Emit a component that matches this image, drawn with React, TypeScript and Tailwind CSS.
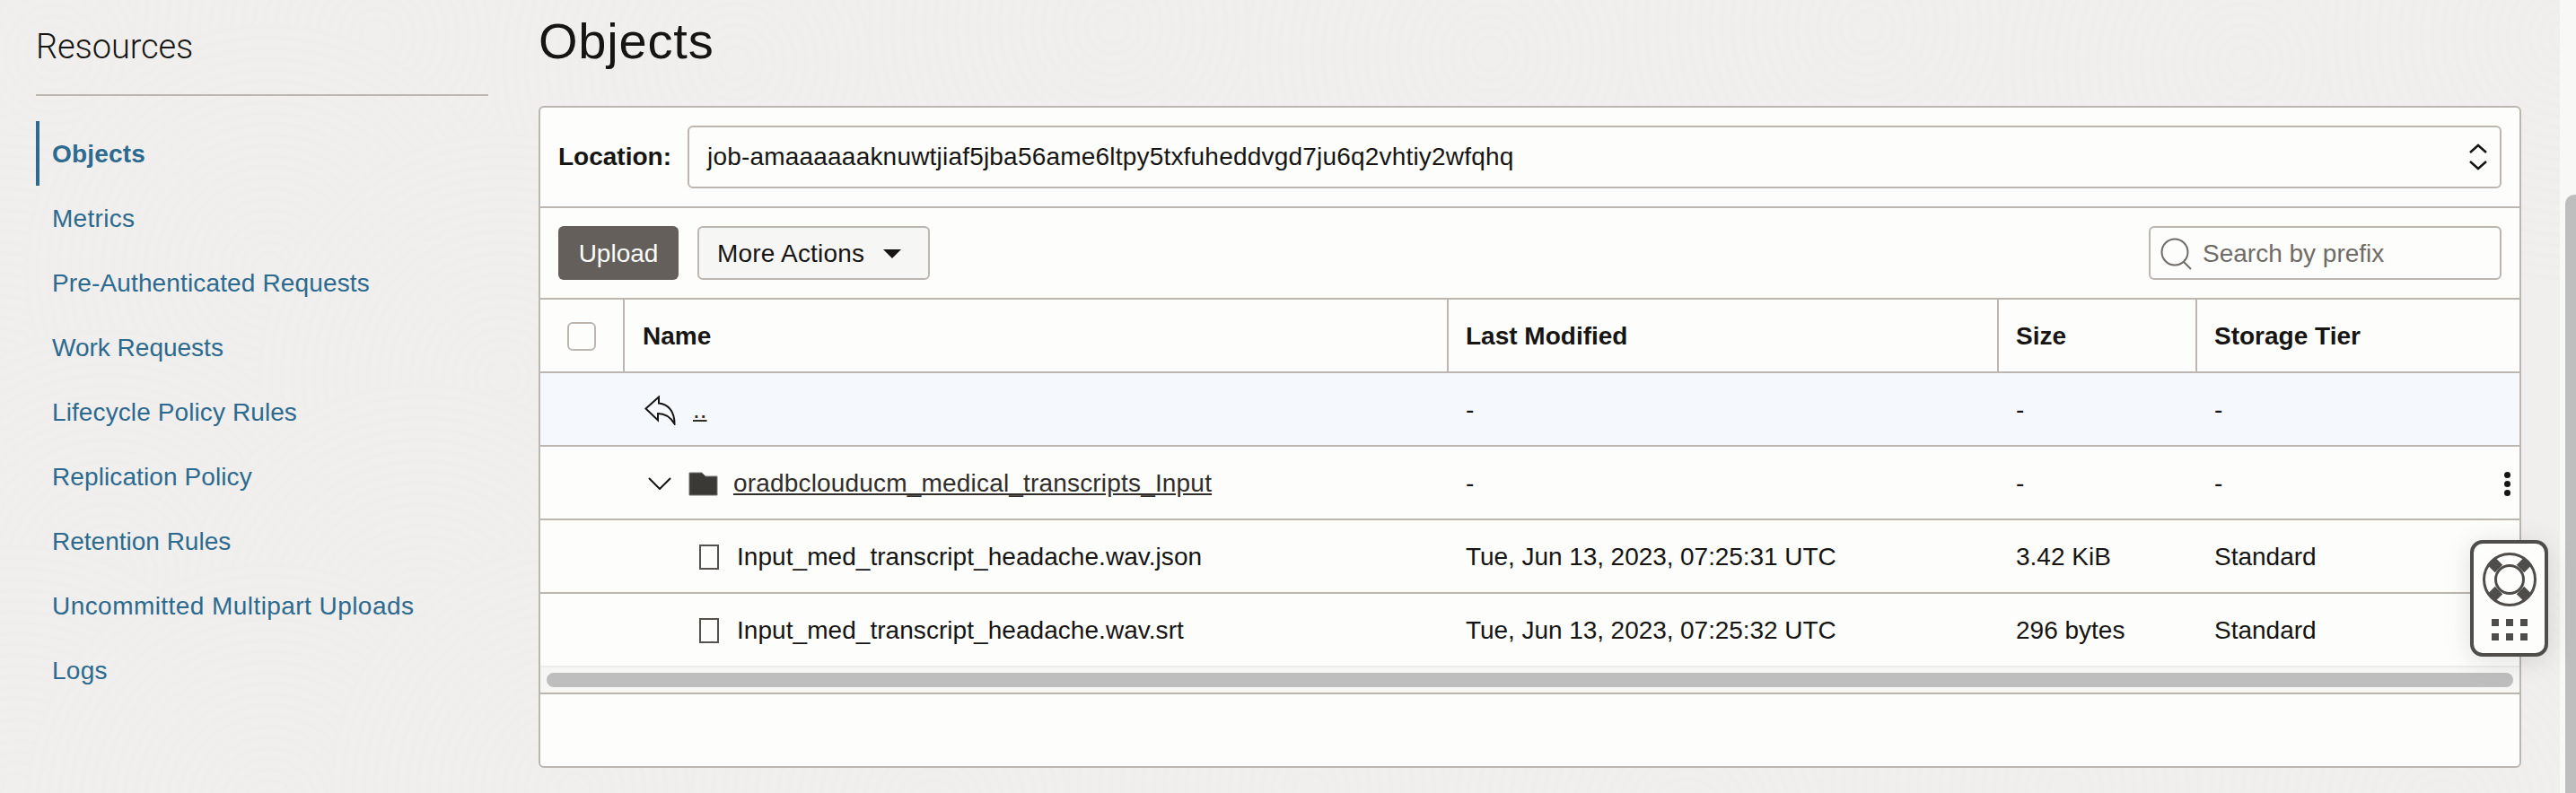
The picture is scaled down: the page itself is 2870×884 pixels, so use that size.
const navItems = [
  { label: 'Objects', spacing: 'tracking-[0.2px]' },
  { label: 'Metrics', spacing: 'tracking-[0.3px]' },
  { label: 'Pre-Authenticated Requests', spacing: 'tracking-[0.14px]' },
  { label: 'Work Requests', spacing: 'tracking-[0px]' },
  { label: 'Lifecycle Policy Rules', spacing: 'tracking-[0.1px]' },
  { label: 'Replication Policy', spacing: 'tracking-[0.1px]' },
  { label: 'Retention Rules', spacing: 'tracking-[0px]' },
  { label: 'Uncommitted Multipart Uploads', spacing: 'tracking-[0.44px]' },
  { label: 'Logs', spacing: 'tracking-[0.3px]' },
];

const files = [
  { name: 'Input_med_transcript_headache.wav.json', modified: 'Tue, Jun 13, 2023, 07:25:31 UTC', size: '3.42 KiB' },
  { name: 'Input_med_transcript_headache.wav.srt', modified: 'Tue, Jun 13, 2023, 07:25:32 UTC', size: '296 bytes' },
];

// centres of the faint fingerprint swirls behind the page, painted back to front
const swirls = [
  [60, 60], [420, 40], [820, 70], [1240, 30], [1660, 60], [2080, 30], [2500, 70], [2860, 40],
  [0, 420], [300, 300], [560, 420], [120, 640], [470, 700], [20, 880], [300, 900], [640, 880],
  [1040, 900], [1460, 880], [1880, 910], [2300, 880], [2720, 900],
];
const rings = Array.from({ length: 22 }, (_, i) => 270 - i * 12);

const rowGrid = 'grid grid-cols-[94px_918px_613px_221px_1fr] items-center';

function Backdrop() {
  return (
    <svg className="absolute inset-0 -z-10" width="2870" height="884" fill="#f0efed" stroke="#efeeec" strokeWidth="4">
      {swirls.map(([cx, cy]) => (
        <g key={`${cx}-${cy}`}>
          {rings.map((r) => (
            <circle key={r} cx={cx} cy={cy} r={r} />
          ))}
        </g>
      ))}
    </svg>
  );
}

function UpDownIcon() {
  return (
    <svg width="22" height="30" viewBox="0 0 22 30" fill="none" stroke="#161513" strokeWidth="2.500">
      <path d="M2 10 L11 2 L20 10" />
      <path d="M2 20 L11 28 L20 20" />
    </svg>
  );
}

function BackIcon() {
  return (
    <svg width="35" height="33" viewBox="0 0 35 33" fill="none" stroke="#161513" strokeWidth="2">
      <path d="M1.500 14.500 L16 1.500 V8.500 C27 9.500 33.500 18 33.500 31.500 C28.500 23 23 20 15 20 V27.500 Z" />
    </svg>
  );
}

function FolderIcon() {
  return (
    <svg width="33" height="27" viewBox="0 0 33 27">
      <path d="M1 1 H15 L19 5 H32 V26 H1 Z" fill="#3b3936" stroke="#77746f" strokeWidth="1" />
    </svg>
  );
}

function FileIcon() {
  return <div className="w-[22px] h-[28px] border-2 border-[#55524e] bg-[#fdfdfb] shrink-0" />;
}

function SearchIcon() {
  return (
    <svg width="36" height="36" viewBox="0 0 36 36" fill="none" stroke="#6f6b66" strokeWidth="2">
      <circle cx="16" cy="16" r="14.500" />
      <path d="M26 27 L34 35" />
    </svg>
  );
}

function HelpWidget() {
  return (
    <div className="absolute left-[2752px] top-[602px] w-[87px] h-[130px] rounded-[14px] border-4 border-[#4f4d4a] bg-[#fdfdfb] shadow-[0_4px_30px_rgba(0,0,0,0.12)] flex flex-col items-center pt-[10px]">
      <svg width="60" height="60" viewBox="0 0 60 60" fill="none" stroke="#4f4d4a">
        <circle cx="30" cy="30" r="28.500" strokeWidth="3" />
        <circle cx="30" cy="30" r="15.500" strokeWidth="3" />
        <path d="M18 18 L10 10 M42 18 L50 10 M18 42 L10 50 M42 42 L50 50" strokeWidth="12" />
      </svg>
      <div className="grid grid-cols-3 gap-x-2 gap-y-2 mt-[14px]">
        {[0, 1, 2, 3, 4, 5].map((i) => (
          <div key={i} className="w-2 h-2 bg-[#4f4d4a]" />
        ))}
      </div>
    </div>
  );
}

export default function App() {
  return (
    <div className="relative isolate flex h-[884px] w-[2870px] overflow-hidden font-['Liberation_Sans',Arial,sans-serif] text-[28px] text-[#161513] bg-[#f0efed]">
      <Backdrop />

      <aside className="w-[600px] shrink-0 pl-10 pr-14 pt-[29px]">
        <h2 className="font-['Roboto',sans-serif] font-light text-[38px] leading-[46px] text-[#161513] tracking-[-0.1px]">Resources</h2>
        <div className="h-0.5 bg-[#bcb6b1] mt-[30px] mb-7" />
        <nav className="flex flex-col">
          {navItems.map((item, i) => (
            <a
              key={item.label}
              className={
                i === 0
                  ? `h-[72px] flex items-center pt-[2px] pl-[14px] border-l-4 border-[#2c6a8f] text-[#2c6a8f] font-bold ${item.spacing}`
                  : `h-[72px] flex items-center pt-[2px] pl-[18px] text-[#2c6a8f] ${item.spacing}`
              }
            >
              {item.label}
            </a>
          ))}
        </nav>
      </aside>

      <main className="flex-1 pr-[43px]">
        <h1 className="text-[56px] leading-[64px] tracking-[0.8px] text-[#161513] mt-[14px] h-[104px]">Objects</h1>
        <div className="h-[738px] border-2 border-[#bcb6b1] rounded-md bg-[#fdfdfb] flex flex-col">
          <div className="h-[112px] shrink-0 border-b-2 border-[#bcb6b1] flex items-center px-5">
            <span className="font-bold w-[144px] shrink-0">Location:</span>
            <div className="flex-1 h-[70px] border-2 border-[#bcb6b1] rounded-md flex items-center justify-between pl-[20px] pr-[13px]">
              <span className="tracking-[0.2px]">job-amaaaaaaknuwtjiaf5jba56ame6ltpy5txfuheddvgd7ju6q2vhtiy2wfqhq</span>
              <UpDownIcon />
            </div>
          </div>

          <div className="h-[102px] shrink-0 border-b-2 border-[#bcb6b1] flex items-center px-5">
            <button className="h-[60px] w-[134px] pt-[1px] rounded-md bg-[#645f5a] text-[#fdfdfb]">Upload</button>
            <button className="h-[60px] w-[259px] ml-[21px] pt-[1px] rounded-md border-2 border-[#bcb6b1] bg-[#f6f6f5] flex items-center pl-[20px] tracking-[0.2px]">
              More Actions
              <span className="ml-[21px] w-0 h-0 border-x-[10px] border-x-transparent border-t-[10px] border-t-[#161513]" />
            </button>
            <div className="ml-auto w-[393px] h-[60px] pt-[1px] border-2 border-[#bcb6b1] rounded-md flex items-center pl-[11px] gap-[11px] text-[#6f6b66]">
              <SearchIcon />
              <span>Search by prefix</span>
            </div>
          </div>

          <div className={`${rowGrid} h-[82px] shrink-0 border-b-2 border-[#bcb6b1] font-bold`}>
            <div className="h-full border-r-2 border-[#bcb6b1] flex items-center pl-[30px] pt-[2px]">
              <div className="w-[32px] h-[32px] border-2 border-[#bcb6b1] rounded-md" />
            </div>
            <div className="h-full border-r-2 border-[#bcb6b1] flex items-center pl-5 pt-[2px]">Name</div>
            <div className="h-full border-r-2 border-[#bcb6b1] flex items-center pl-[19px] pt-[2px]">Last Modified</div>
            <div className="h-full border-r-2 border-[#bcb6b1] flex items-center pl-[19px] pt-[2px]">Size</div>
            <div className="h-full flex items-center pl-[19px] pt-[2px]">Storage Tier</div>
          </div>

          <div className={`${rowGrid} h-[82px] pt-[2px] shrink-0 border-b-2 border-[#bcb6b1] bg-[#f5f9fd]`}>
            <div />
            <div className="flex items-center pl-[22px] gap-[19px] text-[#312d2a]">
              <BackIcon />
              <a className="underline">..</a>
            </div>
            <div className="pl-[19px]">-</div>
            <div className="pl-[19px]">-</div>
            <div className="pl-[19px]">-</div>
          </div>

          <div className={`${rowGrid} h-[82px] pt-[2px] shrink-0 border-b-2 border-[#bcb6b1]`}>
            <div />
            <div className="flex items-center pl-[26px] text-[#312d2a]">
              <svg width="26" height="14" viewBox="0 0 26 14" fill="none" stroke="#161513" strokeWidth="2">
                <path d="M1 1 L13 13 L25 1" />
              </svg>
              <span className="ml-[19px]"><FolderIcon /></span>
              <a className="underline ml-[17px] tracking-[0.18px]">oradbclouducm_medical_transcripts_Input</a>
            </div>
            <div className="pl-[19px]">-</div>
            <div className="pl-[19px]">-</div>
            <div className="pl-[19px] flex items-center justify-between pr-[10px]">
              -
              <div className="flex flex-col gap-[3px]">
                <div className="w-[7px] h-[7px] rounded-full bg-[#161513]" />
                <div className="w-[7px] h-[7px] rounded-full bg-[#161513]" />
                <div className="w-[7px] h-[7px] rounded-full bg-[#161513]" />
              </div>
            </div>
          </div>

          {files.map((file, i) => (
            <div
              key={file.name}
              className={
                i === 0
                  ? `${rowGrid} h-[82px] pt-[2px] shrink-0 border-b-2 border-[#bcb6b1]`
                  : `${rowGrid} h-[80px] pt-[2px] shrink-0`
              }
            >
              <div />
              <div className="flex items-center pl-[83px] gap-[20px]">
                <FileIcon />
                <span className="tracking-[0.05px]">{file.name}</span>
              </div>
              <div className="pl-[19px] tracking-[-0.06px]">{file.modified}</div>
              <div className="pl-[19px]">{file.size}</div>
              <div className="pl-[19px]">Standard</div>
            </div>
          ))}

          <div className="h-[32px] shrink-0 bg-[#f6f6f5] border-t-2 border-[#ededeb] border-b-2 border-b-[#bcb6b1] flex items-center px-[7px]">
            <div className="w-full h-4 rounded-full bg-[#bebebe]" />
          </div>
        </div>
      </main>

      <div className="w-[18px] shrink-0 bg-[#f8f8f7] pl-[6px] pt-[217px]">
        <div className="h-full rounded-tl-[10px] bg-[#bebebe]" />
      </div>

      <HelpWidget />
    </div>
  );
}
